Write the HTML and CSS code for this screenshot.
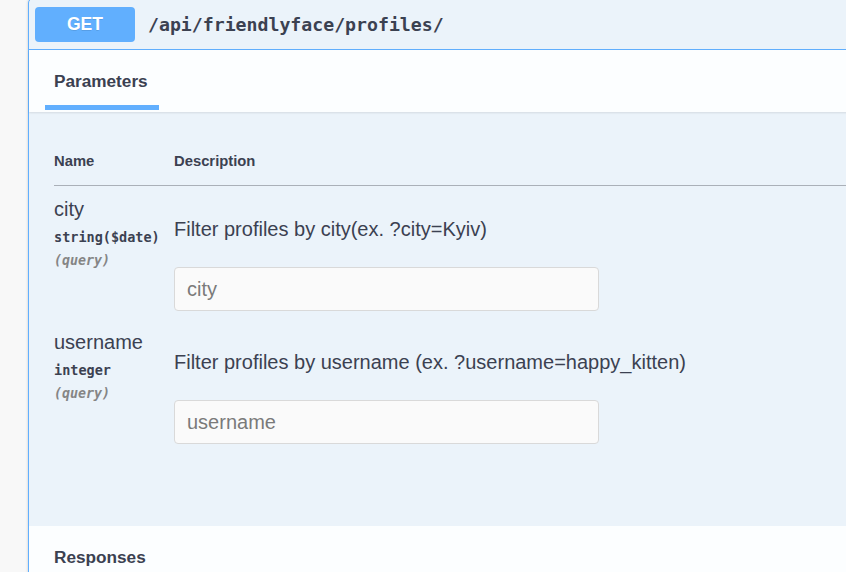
FILE: index.html
```html
<!DOCTYPE html>
<html>
<head>
<meta charset="utf-8">
<link rel="stylesheet" href="styles.css">
</head>
<body>
<div class="page">
  <div class="opblock">
    <div class="summary">
      <span class="method">GET</span>
      <span class="path">/api/friendlyface/profiles/</span>
    </div>
    <div class="section-header">
      <div class="tab"><span class="tab-label">Parameters</span></div>
    </div>
    <div class="table-container">
      <table class="params">
        <thead>
          <tr>
            <th class="col-name">Name</th>
            <th class="col-desc">Description</th>
          </tr>
        </thead>
        <tbody>
          <tr>
            <td class="col-name">
              <div class="p-name">city</div>
              <div class="p-type">string<span class="p-fmt">($date)</span></div>
              <div class="p-in">(query)</div>
            </td>
            <td class="col-desc">
              <p class="desc">Filter profiles by city(ex. ?city=Kyiv)</p>
              <input class="field" type="text" placeholder="city">
            </td>
          </tr>
          <tr>
            <td class="col-name">
              <div class="p-name">username</div>
              <div class="p-type">integer</div>
              <div class="p-in">(query)</div>
            </td>
            <td class="col-desc">
              <p class="desc">Filter profiles by username (ex. ?username=happy_kitten)</p>
              <input class="field" type="text" placeholder="username">
            </td>
          </tr>
        </tbody>
      </table>
    </div>
    <div class="section-header responses">
      <div class="tab"><span class="tab-label">Responses</span></div>
    </div>
  </div>
</div>
</body>
</html>
```

FILE: styles.css
```css
html, body {
  margin: 0;
  padding: 0;
  overflow: hidden;
  background: #f8f8f8;
  font-family: "Liberation Sans", Arial, sans-serif;
  color: #3b4151;
}

.page {
  padding-left: 28px;
  margin-top: -2px;
}

.opblock {
  width: 900px;
  border: 1px solid #61affe;
  border-radius: 5px;
  background: #ebf3fa;
  box-shadow: 0 0 3px rgba(0, 0, 0, 0.19);
}

.summary {
  display: flex;
  align-items: flex-start;
  height: 51px;
  padding: 8px 6px 0;
  border-bottom: 1px solid #61affe;
  box-sizing: border-box;
}

.method {
  display: flex;
  align-items: center;
  justify-content: center;
  width: 100px;
  height: 35px;
  background: #61affe;
  border-radius: 4px;
  color: #fff;
  font-weight: 700;
  font-size: 17.5px;
  text-shadow: 0 1px 0 rgba(0, 0, 0, 0.1);
}

.path {
  margin-left: 13px;
  line-height: 35px;
  font-family: "DejaVu Sans Mono", monospace;
  font-weight: 700;
  font-size: 18.2px;
  color: #3b4151;
}

.section-header {
  display: flex;
  align-items: center;
  height: 62px;
  padding: 0 25px;
  background: rgba(255, 255, 255, 0.85);
  box-shadow: 0 1px 2px rgba(0, 0, 0, 0.1);
}

.tab {
  position: relative;
}

.tab-label {
  font-weight: 700;
  font-size: 17.2px;
  color: #3b4151;
}

.section-header:not(.responses) .tab::after {
  content: "";
  position: absolute;
  left: -9px;
  right: -11px;
  top: 34px;
  height: 5px;
  background: #61affe;
}

.responses {
  align-items: flex-start;
  padding-top: 21px;
  height: 90px;
  box-shadow: none;
  box-sizing: border-box;
}

.table-container {
  padding: 33px 25px 74px;
}

.params {
  width: 100%;
  border-collapse: collapse;
}

.params th {
  text-align: left;
  font-weight: 700;
  font-size: 14.8px;
  padding: 8px 0 16px;
  border-bottom: 1px solid #aab0b8;
  color: #3b4151;
}

.params .col-name {
  width: 120px;
  vertical-align: top;
}

.params td {
  vertical-align: top;
  padding: 12px 0 8px;
}

.p-name {
  font-size: 20px;
  line-height: 23px;
  color: #3b4151;
}

.p-type {
  padding-top: 8px;
  font-family: "DejaVu Sans Mono", monospace;
  font-weight: 700;
  font-size: 13.5px;
  line-height: 16px;
  color: #3b4151;
}

.p-in {
  margin-top: 8px;
  font-family: "DejaVu Sans Mono", monospace;
  font-style: italic;
  font-weight: 700;
  font-size: 13.3px;
  line-height: 16px;
  color: #858585;
}

.desc {
  margin: 20px 0 0;
  font-size: 20px;
  line-height: 23px;
  color: #3b4151;
}

.field {
  display: block;
  box-sizing: border-box;
  width: 425px;
  height: 44px;
  margin: 26px 0 0;
  padding: 0 12px;
  font-family: "Liberation Sans", Arial, sans-serif;
  font-size: 20px;
  color: #3b4151;
  background: #fafafa;
  border: 1px solid #d9d9d9;
  border-radius: 4px;
  outline: none;
}

.field::placeholder {
  color: #7a7a7a;
}
```
